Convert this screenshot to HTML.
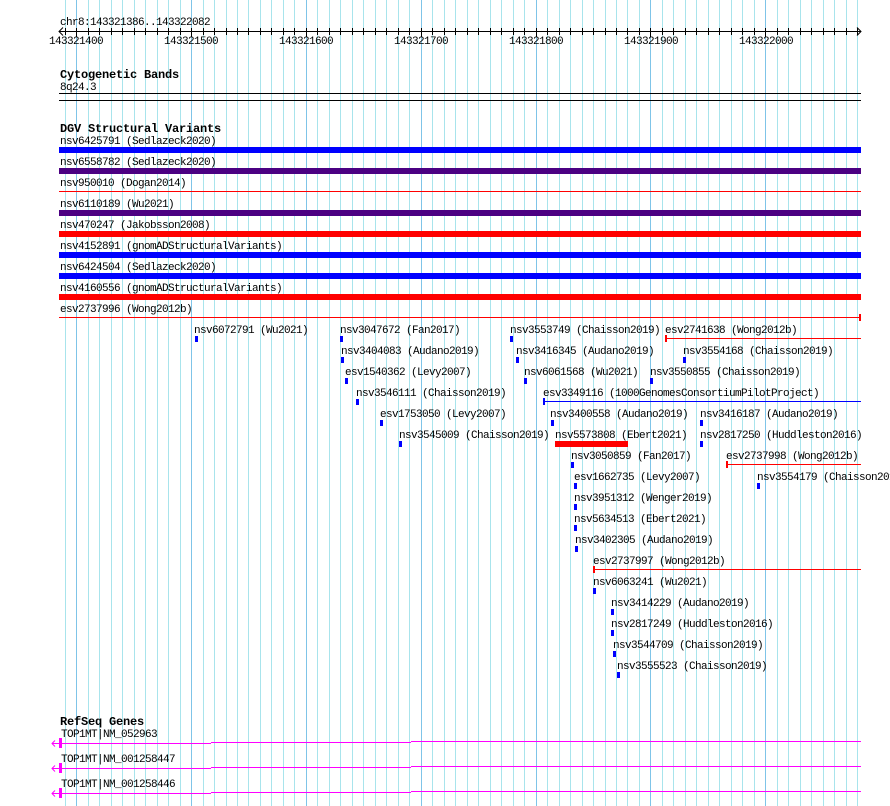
<!DOCTYPE html>
<html><head><meta charset="utf-8"><style>
html,body{margin:0;padding:0;background:#fff;}
svg{display:block;}
text{font-family:"Liberation Mono",monospace;font-size:11px;letter-spacing:-0.6px;fill:#000;}
.b{font-weight:bold;font-size:12px;letter-spacing:-0.2px;}
</style></head><body>
<svg width="890" height="806" xmlns="http://www.w3.org/2000/svg">
<path stroke="#a8e4ec" stroke-width="1" fill="none" d="M65.5 0V806M76.5 0V806M88.5 0V806M99.5 0V806M111.5 0V806M122.5 0V806M134.5 0V806M145.5 0V806M157.5 0V806M168.5 0V806M180.5 0V806M191.5 0V806M203.5 0V806M214.5 0V806M226.5 0V806M237.5 0V806M248.5 0V806M260.5 0V806M271.5 0V806M283.5 0V806M294.5 0V806M306.5 0V806M317.5 0V806M329.5 0V806M340.5 0V806M352.5 0V806M363.5 0V806M375.5 0V806M386.5 0V806M398.5 0V806M409.5 0V806M421.5 0V806M432.5 0V806M444.5 0V806M455.5 0V806M467.5 0V806M478.5 0V806M490.5 0V806M501.5 0V806M513.5 0V806M524.5 0V806M536.5 0V806M547.5 0V806M559.5 0V806M570.5 0V806M582.5 0V806M593.5 0V806M605.5 0V806M616.5 0V806M627.5 0V806M639.5 0V806M650.5 0V806M662.5 0V806M673.5 0V806M685.5 0V806M696.5 0V806M708.5 0V806M719.5 0V806M731.5 0V806M742.5 0V806M754.5 0V806M765.5 0V806M777.5 0V806M788.5 0V806M800.5 0V806M811.5 0V806M823.5 0V806M834.5 0V806M846.5 0V806M857.5 0V806"/>
<path stroke="#7fc4e8" stroke-width="1" fill="none" d="M76.5 0V806M191.5 0V806M306.5 0V806M421.5 0V806M536.5 0V806M650.5 0V806M765.5 0V806"/>
<!-- ruler -->
<text x="60" y="25">chr8:143321386..143322082</text>
<rect x="59" y="31" width="802" height="1" fill="#000"/>
<path stroke="#000" stroke-width="1" fill="none" d="M65.5 28V35M76.5 28V35M88.5 28V35M99.5 28V35M111.5 28V35M122.5 28V35M134.5 28V35M145.5 28V35M157.5 28V35M168.5 28V35M180.5 28V35M191.5 28V35M203.5 28V35M214.5 28V35M226.5 28V35M237.5 28V35M248.5 28V35M260.5 28V35M271.5 28V35M283.5 28V35M294.5 28V35M306.5 28V35M317.5 28V35M329.5 28V35M340.5 28V35M352.5 28V35M363.5 28V35M375.5 28V35M386.5 28V35M398.5 28V35M409.5 28V35M421.5 28V35M432.5 28V35M444.5 28V35M455.5 28V35M467.5 28V35M478.5 28V35M490.5 28V35M501.5 28V35M513.5 28V35M524.5 28V35M536.5 28V35M547.5 28V35M559.5 28V35M570.5 28V35M582.5 28V35M593.5 28V35M605.5 28V35M616.5 28V35M627.5 28V35M639.5 28V35M650.5 28V35M662.5 28V35M673.5 28V35M685.5 28V35M696.5 28V35M708.5 28V35M719.5 28V35M731.5 28V35M742.5 28V35M754.5 28V35M765.5 28V35M777.5 28V35M788.5 28V35M800.5 28V35M811.5 28V35M823.5 28V35M834.5 28V35M846.5 28V35M857.5 28V35M76.5 28V37M191.5 28V37M306.5 28V37M421.5 28V37M536.5 28V37M650.5 28V37M765.5 28V37"/>
<path d="M63 27.5 L59 31.5 L63 35.5 M857 27.5 L861 31.5 L857 35.5" stroke="#000" fill="none"/>
<g text-anchor="middle">
<text x="76" y="44">143321400</text><text x="191" y="44">143321500</text><text x="306" y="44">143321600</text>
<text x="421" y="44">143321700</text><text x="536" y="44">143321800</text><text x="651" y="44">143321900</text>
<text x="766" y="44">143322000</text></g>
<!-- cyto -->
<text class="b" x="60" y="78">Cytogenetic Bands</text>
<text x="60" y="90">8q24.3</text>
<rect x="59" y="93" width="802" height="1" fill="#000"/>
<rect x="59" y="100" width="802" height="1" fill="#000"/>
<!-- DGV -->
<text class="b" x="60" y="132">DGV Structural Variants</text>
<text x="60" y="144">nsv6425791 (Sedlazeck2020)</text><rect x="59" y="147" width="802" height="6" fill="#0000ff"/>
<text x="60" y="165">nsv6558782 (Sedlazeck2020)</text><rect x="59" y="168" width="802" height="6" fill="#4b0082"/>
<text x="60" y="186">nsv950010 (Dogan2014)</text><rect x="59" y="191" width="802" height="1" fill="#ff0000"/>
<text x="60" y="207">nsv6110189 (Wu2021)</text><rect x="59" y="210" width="802" height="6" fill="#4b0082"/>
<text x="60" y="228">nsv470247 (Jakobsson2008)</text><rect x="59" y="231" width="802" height="6" fill="#ff0000"/>
<text x="60" y="249">nsv4152891 (gnomADStructuralVariants)</text><rect x="59" y="252" width="802" height="6" fill="#0000ff"/>
<text x="60" y="270">nsv6424504 (Sedlazeck2020)</text><rect x="59" y="273" width="802" height="6" fill="#0000ff"/>
<text x="60" y="291">nsv4160556 (gnomADStructuralVariants)</text><rect x="59" y="294" width="802" height="6" fill="#ff0000"/>
<text x="60" y="312">esv2737996 (Wong2012b)</text><rect x="59" y="317" width="802" height="1" fill="#ff0000"/><rect x="859" y="314" width="2" height="7" fill="#ff0000"/>
<g fill="#0000ff">
<text x="194" y="333">nsv6072791 (Wu2021)</text><rect x="195" y="336" width="3" height="6"/>
<text x="340" y="333">nsv3047672 (Fan2017)</text><rect x="340" y="336" width="3" height="6"/>
<text x="510" y="333">nsv3553749 (Chaisson2019)</text><rect x="510" y="336" width="3" height="6"/>
<text x="665" y="333">esv2741638 (Wong2012b)</text>
<text x="341" y="354">nsv3404083 (Audano2019)</text><rect x="341" y="357" width="3" height="6"/>
<text x="516" y="354">nsv3416345 (Audano2019)</text><rect x="516" y="357" width="3" height="6"/>
<text x="683" y="354">nsv3554168 (Chaisson2019)</text><rect x="683" y="357" width="3" height="6"/>
<text x="345" y="375">esv1540362 (Levy2007)</text><rect x="345" y="378" width="3" height="6"/>
<text x="524" y="375">nsv6061568 (Wu2021)</text><rect x="524" y="378" width="3" height="6"/>
<text x="650" y="375">nsv3550855 (Chaisson2019)</text><rect x="650" y="378" width="3" height="6"/>
<text x="356" y="396">nsv3546111 (Chaisson2019)</text><rect x="356" y="399" width="3" height="6"/>
<text x="543" y="396">esv3349116 (1000GenomesConsortiumPilotProject)</text><rect x="543" y="401" width="318" height="1"/><rect x="543" y="398" width="2" height="7"/>
<text x="380" y="417">esv1753050 (Levy2007)</text><rect x="380" y="420" width="3" height="6"/>
<text x="550" y="417">nsv3400558 (Audano2019)</text><rect x="551" y="420" width="3" height="6"/>
<text x="700" y="417">nsv3416187 (Audano2019)</text><rect x="700" y="420" width="3" height="6"/>
<text x="399" y="438">nsv3545009 (Chaisson2019)</text><rect x="399" y="441" width="3" height="6"/>
<text x="555" y="438">nsv5573808 (Ebert2021)</text><rect x="555" y="441" width="73" height="6" fill="#ff0000"/>
<text x="700" y="438">nsv2817250 (Huddleston2016)</text><rect x="700" y="441" width="3" height="6"/>
<text x="571" y="459">nsv3050859 (Fan2017)</text><rect x="571" y="462" width="3" height="6"/>
<text x="726" y="459">esv2737998 (Wong2012b)</text>
<text x="574" y="480">esv1662735 (Levy2007)</text><rect x="574" y="483" width="3" height="6"/>
<text x="757" y="480">nsv3554179 (Chaisson2019)</text><rect x="757" y="483" width="3" height="6"/>
<text x="574" y="501">nsv3951312 (Wenger2019)</text><rect x="574" y="504" width="3" height="6"/>
<text x="574" y="522">nsv5634513 (Ebert2021)</text><rect x="574" y="525" width="3" height="6"/>
<text x="575" y="543">nsv3402305 (Audano2019)</text><rect x="575" y="546" width="3" height="6"/>
<text x="593" y="564">esv2737997 (Wong2012b)</text>
<text x="593" y="585">nsv6063241 (Wu2021)</text><rect x="593" y="588" width="3" height="6"/>
<text x="611" y="606">nsv3414229 (Audano2019)</text><rect x="611" y="609" width="3" height="6"/>
<text x="611" y="627">nsv2817249 (Huddleston2016)</text><rect x="611" y="630" width="3" height="6"/>
<text x="613" y="648">nsv3544709 (Chaisson2019)</text><rect x="613" y="651" width="3" height="6"/>
<text x="617" y="669">nsv3555523 (Chaisson2019)</text><rect x="617" y="672" width="3" height="6"/>
</g>
<g fill="#ff0000">
<rect x="665" y="338" width="196" height="1"/><rect x="665" y="335" width="2" height="7"/>
<rect x="726" y="464" width="135" height="1"/><rect x="726" y="461" width="2" height="7"/>
<rect x="593" y="569" width="268" height="1"/><rect x="593" y="566" width="2" height="7"/>
</g>
<!-- RefSeq -->
<text class="b" x="60" y="725">RefSeq Genes</text>
<text x="61" y="737">TOP1MT|NM_052963</text>
<text x="61" y="762">TOP1MT|NM_001258447</text>
<text x="61" y="787">TOP1MT|NM_001258446</text>
<g fill="#ff00ff">
<rect x="59" y="738" width="3" height="10"/><rect x="62" y="743" width="149" height="1"/><rect x="211" y="742" width="200" height="1"/><rect x="411" y="741" width="450" height="1"/>
<rect x="59" y="763" width="3" height="10"/><rect x="62" y="768" width="149" height="1"/><rect x="211" y="767" width="200" height="1"/><rect x="411" y="766" width="450" height="1"/>
<rect x="59" y="788" width="3" height="10"/><rect x="62" y="793" width="149" height="1"/><rect x="211" y="792" width="200" height="1"/><rect x="411" y="791" width="450" height="1"/>
</g>
<path d="M55 740.5 L52 743.5 L55 746.5 M52 743.5 H59 M55 765.5 L52 768.5 L55 771.5 M52 768.5 H59 M55 790.5 L52 793.5 L55 796.5 M52 793.5 H59" stroke="#ff00ff" fill="none"/>
</svg>
</body></html>
